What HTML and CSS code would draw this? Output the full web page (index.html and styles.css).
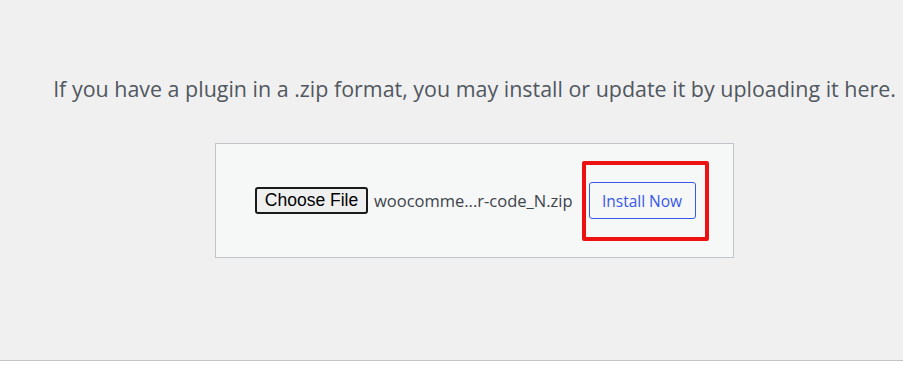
FILE: index.html
```html
<!DOCTYPE html>
<html lang="en">
<head>
<meta charset="utf-8">
<title>Upload Plugin</title>
<link rel="stylesheet" href="styles.css">
</head>
<body>
<div class="page">
  <div class="upload-plugin">
    <p class="install-help">If you have a plugin in a .zip format, you may install or update it by uploading it here.</p>
    <form class="upload-form" onsubmit="return false">
      <button type="button" class="choose-file">Choose File</button>
      <span class="file-name">woocomme...r-code_N.zip</span>
      <span class="install-wrap">
        <button type="submit" class="install-now">Install Now</button>
        <span class="highlight"></span>
      </span>
    </form>
  </div>
</div>
<div class="footer-space"></div>
</body>
</html>
```

FILE: styles.css
```css
html, body {
  margin: 0;
  padding: 0;
  background: #ffffff;
}

.page {
  height: 361px;
  box-sizing: border-box;
  background: #f0f0f1;
  border-bottom: 1px solid #c3c4c7;
}

.upload-plugin {
  padding-left: 46px;
  padding-top: 73px;
  display: flex;
  flex-direction: column;
  align-items: center;
}

.install-help {
  margin: 0;
  font-family: "Open Sans", "Noto Sans", sans-serif;
  font-size: 21.45px;
  line-height: 32px;
  color: #50575e;
  white-space: nowrap;
}

.upload-form {
  margin-top: 38px;
  width: 519px;
  height: 115px;
  box-sizing: border-box;
  border: 1px solid #c3c4c7;
  background: #f6f7f7;
  display: flex;
  align-items: center;
  padding-left: 39px;
}

.choose-file {
  font-family: "Liberation Sans", Arial, sans-serif;
  font-size: 17.5px;
  color: #000000;
  background: #efefef;
  border: 2px solid #1a1a1a;
  border-radius: 3px;
  height: 27px;
  width: 113px;
  padding: 0;
  line-height: 23px;
}

.file-name {
  margin-left: 6px;
  font-family: "Open Sans", "Noto Sans", sans-serif;
  font-size: 16.5px;
  color: #3c434a;
}

.install-wrap {
  position: relative;
  margin-left: 16px;
  display: inline-flex;
}

.install-now {
  font-family: "Open Sans", "Noto Sans", sans-serif;
  font-size: 15.5px;
  color: #3858e9;
  background: #f6f7f7;
  border: 1px solid #3858e9;
  border-radius: 3px;
  width: 107px;
  height: 37px;
  padding: 0;
}

.highlight {
  position: absolute;
  top: -21px;
  bottom: -22px;
  left: -7px;
  right: -13px;
  border: 4px solid #ee1111;
  border-radius: 2px;
  pointer-events: none;
}
```
